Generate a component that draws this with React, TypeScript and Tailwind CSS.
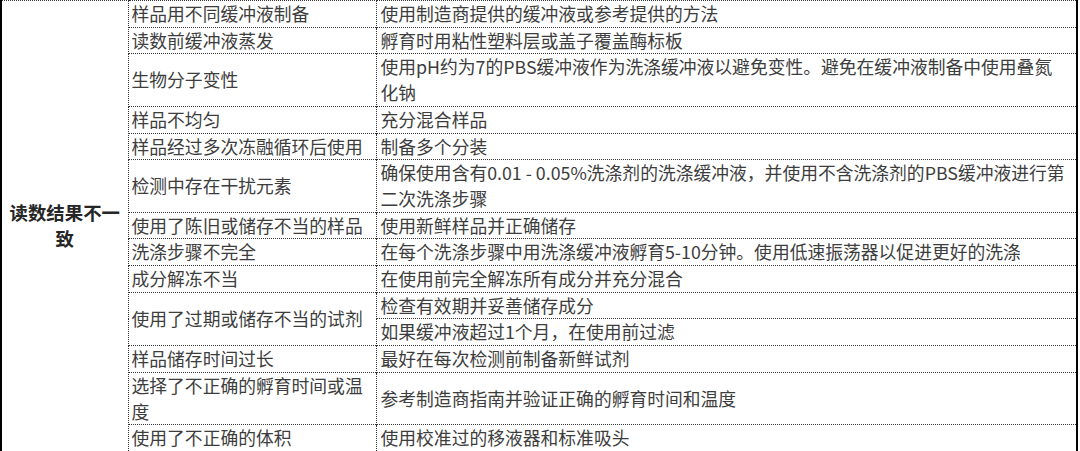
import React from "react"

type Row = {
  cause: React.ReactNode
  fixes: React.ReactNode[]
}

const rows: Row[] = [
  { cause: "样品用不同缓冲液制备", fixes: ["使用制造商提供的缓冲液或参考提供的方法"] },
  { cause: "读数前缓冲液蒸发", fixes: ["孵育时用粘性塑料层或盖子覆盖酶标板"] },
  {
    cause: "生物分子变性",
    fixes: [
      <>
        使用pH约为7的PBS缓冲液作为洗涤缓冲液以避免变性。避免在缓冲液制备中使用叠氮
        <br />
        化钠
      </>,
    ],
  },
  { cause: "样品不均匀", fixes: ["充分混合样品"] },
  { cause: "样品经过多次冻融循环后使用", fixes: ["制备多个分装"] },
  {
    cause: "检测中存在干扰元素",
    fixes: [
      <>
        确保使用含有0.01 - 0.05%洗涤剂的洗涤缓冲液，并使用不含洗涤剂的PBS缓冲液进行第
        <br />
        二次洗涤步骤
      </>,
    ],
  },
  { cause: "使用了陈旧或储存不当的样品", fixes: ["使用新鲜样品并正确储存"] },
  {
    cause: "洗涤步骤不完全",
    fixes: ["在每个洗涤步骤中用洗涤缓冲液孵育5-10分钟。使用低速振荡器以促进更好的洗涤"],
  },
  { cause: "成分解冻不当", fixes: ["在使用前完全解冻所有成分并充分混合"] },
  {
    cause: "使用了过期或储存不当的试剂",
    fixes: ["检查有效期并妥善储存成分", "如果缓冲液超过1个月，在使用前过滤"],
  },
  { cause: "样品储存时间过长", fixes: ["最好在每次检测前制备新鲜试剂"] },
  {
    cause: (
      <>
        选择了不正确的孵育时间或温
        <br />度
      </>
    ),
    fixes: ["参考制造商指南并验证正确的孵育时间和温度"],
  },
  { cause: "使用了不正确的体积", fixes: ["使用校准过的移液器和标准吸头"] },
]

const cell =
  "border-t border-dotted border-[#333] px-[3px] py-0 align-middle whitespace-nowrap"

export default function App() {
  const totalLines = rows.reduce((n, r) => n + r.fixes.length, 0)

  return (
    <div className="bg-white w-[1080px] h-[451px] overflow-hidden">
      <div className="w-[1078px] border-x-2 border-black">
        <table className="w-full table-fixed border-collapse text-[17.8px] leading-[25.7px] text-[#3d3d3d] font-['Noto_Sans_CJK_SC','Noto_Sans',sans-serif]">
          <colgroup>
            <col className="w-[126px]" />
            <col className="w-[248px]" />
            <col />
          </colgroup>
          <tbody>
            {rows.map((row, i) =>
              row.fixes.map((fix, j) => (
                <tr key={`${i}-${j}`}>
                  {i === 0 && j === 0 && (
                    <td
                      rowSpan={totalLines}
                      className="border-t border-r border-dotted border-[#333] px-0 text-center align-middle font-bold text-[18.4px] text-[#262626]"
                    >
                      读数结果不一
                      <br />致
                    </td>
                  )}
                  {j === 0 && (
                    <td
                      rowSpan={row.fixes.length}
                      className={`${cell} border-r`}
                    >
                      {row.cause}
                    </td>
                  )}
                  <td className={`${cell} pl-[4px]`}>{fix}</td>
                </tr>
              ))
            )}
          </tbody>
        </table>
      </div>
    </div>
  )
}
